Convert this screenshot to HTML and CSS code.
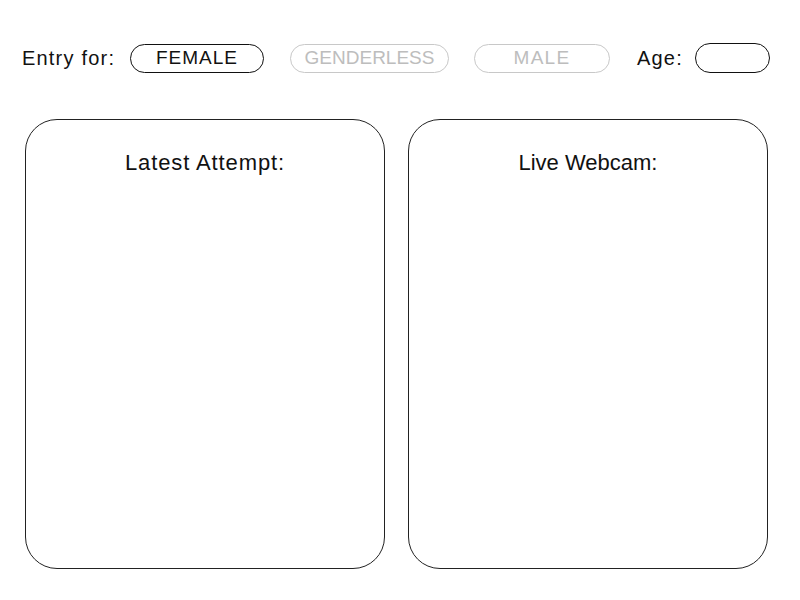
FILE: index.html
```html
<!DOCTYPE html>
<html>
<head>
<meta charset="utf-8">
<link rel="stylesheet" href="styles.css">
</head>
<body>
<div class="page">
  <div class="entry-row">
    <span class="label label-entry">Entry for:</span>
    <button class="pill pill-active pill-female">FEMALE</button>
    <button class="pill pill-off pill-genderless">GENDERLESS</button>
    <button class="pill pill-off pill-male">MALE</button>
    <span class="label label-age">Age:</span>
    <span class="age-input"></span>
  </div>
  <div class="panels">
    <div class="panel">
      <div class="panel-title title-latest">Latest Attempt:</div>
    </div>
    <div class="panel">
      <div class="panel-title title-live">Live Webcam:</div>
    </div>
  </div>
</div>
</body>
</html>
```
FILE: styles.css
```css
html, body {
  margin: 0;
  padding: 0;
  background: #ffffff;
}
.page {
  width: 800px;
  height: 600px;
  font-family: "Liberation Sans", Arial, sans-serif;
  color: #111;
}
.entry-row {
  display: flex;
  align-items: center;
  height: 30px;
  padding-top: 43px;
  padding-left: 22px;
}
.label {
  font-size: 20px;
  letter-spacing: 1.2px;
  line-height: 30px;
}
.label-entry {
  width: 108px;
}
.label-age {
  margin-left: 27px;
  width: 58px;
}
.pill {
  box-sizing: border-box;
  height: 29px;
  border-radius: 15px;
  background: #fff;
  font-family: "Liberation Sans", Arial, sans-serif;
  font-size: 19px;
  letter-spacing: 1px;
  padding: 0;
  display: flex;
  align-items: center;
  justify-content: center;
}
.pill-active {
  border: 1.5px solid #111;
  color: #111;
}
.pill-off {
  border: 1.5px solid #c8c8c8;
  color: #bdbdbd;
}
.pill-female {
  width: 134px;
}
.pill-genderless {
  width: 159px;
  margin-left: 26px;
  letter-spacing: 0;
}
.pill-male {
  width: 136px;
  margin-left: 25px;
  letter-spacing: 1.3px;
}
.age-input {
  box-sizing: border-box;
  width: 75px;
  height: 30px;
  border: 1.5px solid #111;
  border-radius: 15px;
}
.panels {
  display: flex;
  gap: 23px;
  padding-left: 25px;
  margin-top: 46px;
}
.panel {
  box-sizing: border-box;
  width: 360px;
  height: 450px;
  border: 1.5px solid #222;
  border-radius: 32px;
}
.panel-title {
  text-align: center;
  font-size: 22px;
  padding-top: 30px;
  line-height: 26px;
}
.title-latest {
  letter-spacing: 0.9px;
}
.title-live {
  letter-spacing: 0;
}
```
